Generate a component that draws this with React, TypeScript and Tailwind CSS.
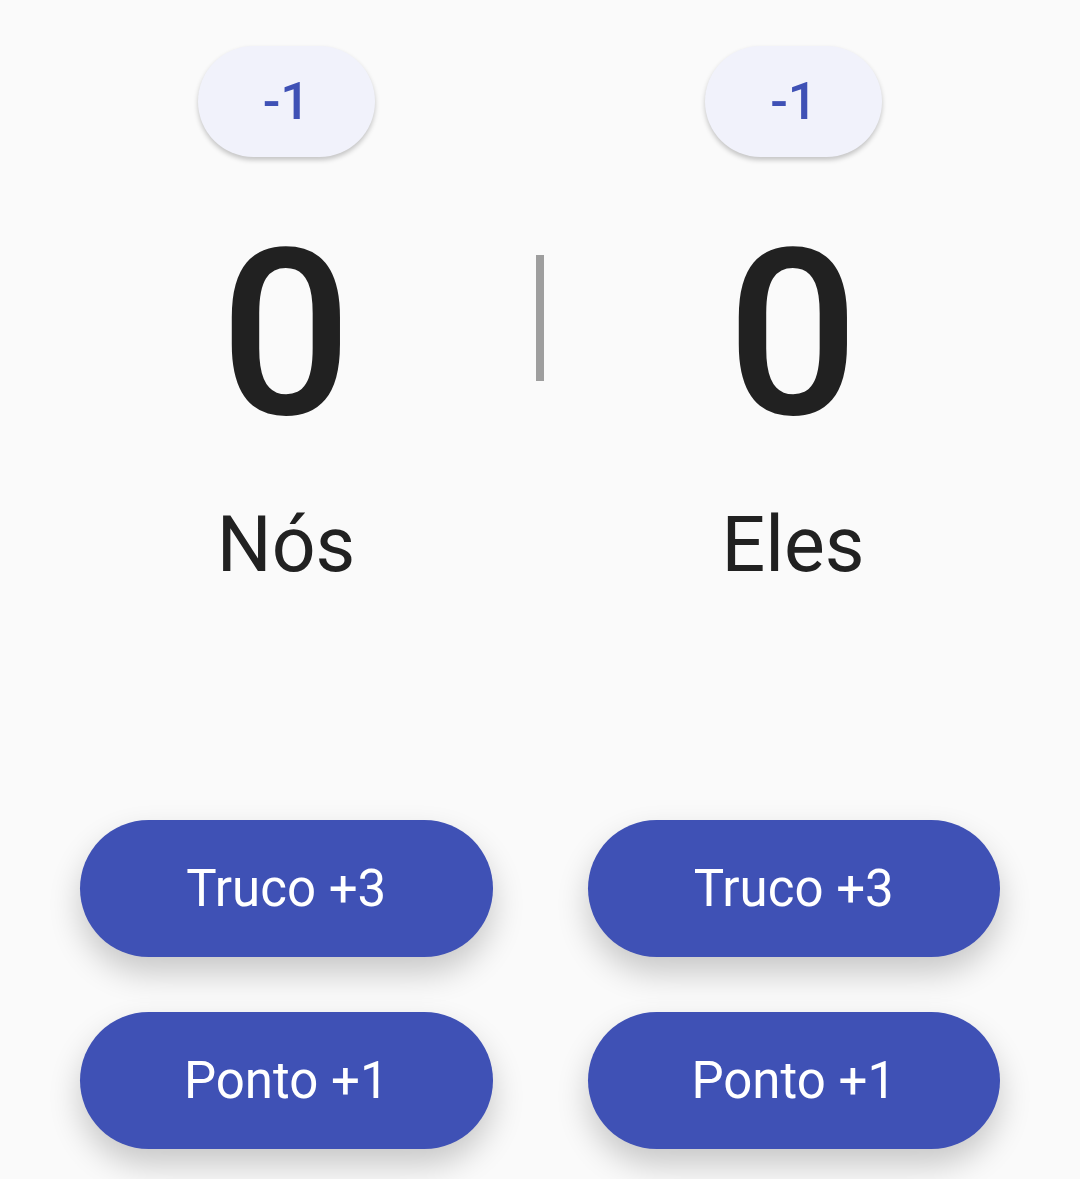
const teams = ["Nós", "Eles"];

function MinusPill() {
  return (
    <button className="w-[177px] h-[111px] rounded-full bg-[#f1f2fb] text-[#3f51b5] text-[52px] font-medium leading-none shadow-[0_3px_5px_rgba(0,0,0,0.22)] flex items-center justify-center">
      -1
    </button>
  );
}

function ActionButton({ label }: { label: string }) {
  return (
    <button className="w-full h-[137px] rounded-full bg-[#3f51b5] text-white text-[51px] leading-none shadow-[0_16px_32px_rgba(0,0,0,0.2)] flex items-center justify-center">
      {label}
    </button>
  );
}

export default function App() {
  return (
    <div
      className="min-h-[1179px] bg-[#fafafa] px-[80px] pt-[46px] text-[#212121]"
      style={{ fontFamily: "Roboto, 'Noto Sans', sans-serif" }}
    >
      {/* -1 buttons */}
      <div className="grid grid-cols-2 gap-x-[95px]">
        {teams.map((t) => (
          <div key={t} className="flex justify-center">
            <MinusPill />
          </div>
        ))}
      </div>

      {/* Scores */}
      <div className="flex mt-[62px]">
        <div className="w-[412px] flex flex-col items-center">
          <span className="text-[232px] font-medium leading-none">0</span>
          <span className="mt-[56px] text-[77px] leading-none">{teams[0]}</span>
        </div>
        <div className="w-[95px] flex justify-center">
          <div className="mt-[36px] w-[8px] h-[126px] bg-[#9e9e9e]" />
        </div>
        <div className="w-[412px] flex flex-col items-center">
          <span className="text-[232px] font-medium leading-none">0</span>
          <span className="mt-[56px] text-[77px] leading-none">{teams[1]}</span>
        </div>
      </div>

      {/* Actions */}
      <div className="grid grid-cols-2 gap-x-[95px] gap-y-[55px] mt-[236px]">
        <ActionButton label="Truco +3" />
        <ActionButton label="Truco +3" />
        <ActionButton label="Ponto +1" />
        <ActionButton label="Ponto +1" />
      </div>
    </div>
  );
}
